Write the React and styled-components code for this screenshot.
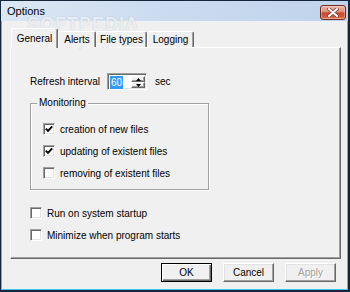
import React from "react";
import styled, { createGlobalStyle } from "styled-components";

const GlobalStyle = createGlobalStyle`
  html, body { margin: 0; padding: 0; background: #f0f0f0; }
  body { font-family: "Liberation Sans", Arial, sans-serif; font-size: 10px; color: #000; }
  * { box-sizing: border-box; }
`;

const Window = styled.div`
  position: relative;
  width: 350px;
  height: 292px;
  display: flex;
  flex-direction: column;
  border-style: solid;
  border-color: #16263a;
  border-width: 1px 2px 2px 1px;
  background: #f0f0f0;
  overflow: hidden;
`;

const TitleBar = styled.div`
  flex: none;
  height: 20px;
  display: flex;
  align-items: center;
  justify-content: space-between;
  padding: 0 2px 0 6px;
  background: linear-gradient(to right, #dce7f4 0%, #ccdcf0 45%, #bfd3ec 100%);
`;

const Title = styled.span`
  position: relative;
  z-index: 2;
  font-size: 11px;
  line-height: 1;
  color: #000;
`;

const CloseButton = styled.div`
  width: 26px;
  height: 15px;
  margin-top: 2px;
  border: 1px solid #6e2a1c;
  border-radius: 3px;
  display: flex;
  align-items: center;
  justify-content: center;
  background: linear-gradient(#ecb6a8 0%, #de8e79 45%, #c9482d 52%, #d35c40 85%, #e08a6e 100%);
  box-shadow: inset 0 0 0 1px rgba(255, 255, 255, 0.3);
`;

const Body = styled.div`
  flex: 1;
  display: flex;
  flex-direction: column;
  border: 1px solid #3ec4ee;
  border-top: none;
  padding: 7px 6px 7px 8px;
`;

const TabStrip = styled.div`
  flex: none;
  height: 19px;
  display: flex;
  align-items: flex-end;
  padding-left: 1px;
`;

const Tab = styled.div`
  position: relative;
  z-index: ${(p) => (p.$active ? 2 : 1)};
  width: ${(p) => p.$w}px;
  height: ${(p) => (p.$active ? 20 : 16)}px;
  margin-bottom: ${(p) => (p.$active ? -1 : 0)}px;
  display: flex;
  align-items: center;
  justify-content: center;
  background: #f0f0f0;
  border-top: 1px solid #fff;
  border-left: 1px solid #fff;
  border-right: 1px solid #696969;
  border-radius: 2px 2px 0 0;
  box-shadow: inset -1px 0 0 #a0a0a0;
  padding-bottom: ${(p) => (p.$active ? 1 : 0)}px;
`;

const Panel = styled.div`
  flex: none;
  height: 212px;
  display: flex;
  flex-direction: column;
  align-items: flex-start;
  border-style: solid;
  border-width: 1px;
  border-color: #fff #696969 #696969 #fff;
  box-shadow: inset -1px -1px 0 #a0a0a0;
  padding: 25px 0 0 19px;
`;

const Row = styled.div`
  display: flex;
  align-items: center;
  height: 17px;
`;

const FieldLabel = styled.span`
  width: 77px;
`;

const Spin = styled.div`
  width: 40px;
  height: 17px;
  display: flex;
  background: #fff;
  border-style: solid;
  border-width: 1px;
  border-color: #a0a0a0 #fff #fff #a0a0a0;
  box-shadow: inset 1px 1px 0 #696969, inset -1px -1px 0 #e3e3e3;
  padding: 2px 1px 1px 2px;
  margin-right: 8px;
`;

const SpinValue = styled.div`
  flex: 1;
  display: flex;
  align-items: center;
`;

const Selected = styled.span`
  background: #3399ff;
  color: #fff;
  padding: 1px 1px;
  line-height: 11px;
`;

const SpinButtons = styled.div`
  width: 14px;
  display: flex;
  flex-direction: column;
`;

const SpinButton = styled.div`
  flex: 1;
  display: flex;
  align-items: center;
  justify-content: center;
  background: #f0f0f0;
  border-style: solid;
  border-width: 1px;
  border-color: #fff #696969 #696969 #fff;
  box-shadow: inset -1px -1px 0 #a0a0a0;
`;

const Group = styled.div`
  position: relative;
  width: 179px;
  height: 87px;
  margin-top: 13px;
  border: 1px solid #a0a0a0;
  box-shadow: 1px 1px 0 #fff, inset 1px 1px 0 #fff;
  padding: 14px 0 5px 12px;
`;

const Legend = styled.span`
  position: absolute;
  top: -7px;
  left: 6px;
  padding: 0 2px;
  background: #f0f0f0;
  line-height: 12px;
`;

const CheckRow = styled.div`
  display: flex;
  align-items: center;
  gap: 5px;
  height: 22px;
  margin-top: ${(p) => p.$mt || 0}px;
`;

const Box = styled.div`
  width: 12px;
  height: 12px;
  display: flex;
  align-items: center;
  justify-content: center;
  background: #fff;
  border-style: solid;
  border-width: 1px;
  border-color: #a0a0a0 #fff #fff #a0a0a0;
  box-shadow: inset 1px 1px 0 #696969, inset -1px -1px 0 #e3e3e3;
`;

const ButtonRow = styled.div`
  flex: none;
  display: flex;
  justify-content: flex-end;
  gap: 11px;
  margin-top: 4px;
  padding-right: 5px;
`;

const Button = styled.div`
  width: 51px;
  height: 19px;
  display: flex;
  align-items: center;
  justify-content: center;
  background: #f0f0f0;
  color: ${(p) => (p.$disabled ? "#a0a0a0" : "#000")};
  text-shadow: ${(p) => (p.$disabled ? "1px 1px 0 #fff" : "none")};
  border: 1px solid ${(p) => (p.$default ? "#000" : "#fff")};
  border-right-color: ${(p) => (p.$default ? "#000" : "#696969")};
  border-bottom-color: ${(p) => (p.$default ? "#000" : "#696969")};
  box-shadow: ${(p) =>
    p.$default
      ? "inset 1px 1px 0 #fff, inset -1px -1px 0 #696969, inset -2px -2px 0 #a0a0a0"
      : "inset -1px -1px 0 #a0a0a0, inset 1px 1px 0 #e3e3e3"};
`;

const Watermark = styled.div`
  position: absolute;
  left: 26px;
  top: 13px;
  font-family: "Liberation Sans", Arial, sans-serif;
  font-weight: bold;
  font-size: 18px;
  letter-spacing: 1px;
  color: rgba(255, 255, 255, 0.75);
  text-shadow: 0 0 1px rgba(110, 130, 150, 0.5);
  pointer-events: none;
`;

const WatermarkUrl = styled.div`
  position: absolute;
  left: 46px;
  top: 40px;
  font-size: 8px;
  color: rgba(170, 170, 170, 0.35);
  pointer-events: none;
`;

const Check = () => (
  <svg width="8" height="8" viewBox="0 0 8 8">
    <polyline points="0.8,3.6 3,5.8 7.2,1.3" fill="none" stroke="#000" strokeWidth="1.9" />
  </svg>
);

const Arrow = ({ up }) => (
  <svg width="5" height="3" viewBox="0 0 5 3">
    <polygon points={up ? "2.5,0 5,3 0,3" : "0,0 5,0 2.5,3"} fill="#000" />
  </svg>
);

const CheckItem = ({ checked, children, mt }) => (
  <CheckRow $mt={mt}>
    <Box>{checked && <Check />}</Box>
    <span>{children}</span>
  </CheckRow>
);

export default function App() {
  return (
    <>
      <GlobalStyle />
      <Window>
        <TitleBar>
          <Title>Options</Title>
          <CloseButton>
            <svg width="12" height="9" viewBox="0 0 12 9">
              <path d="M2 1 L10 8 M10 1 L2 8" stroke="#7a3a2c" strokeWidth="3.4" strokeLinecap="round" />
              <path d="M2 1 L10 8 M10 1 L2 8" stroke="#fff" strokeWidth="2" strokeLinecap="round" />
            </svg>
          </CloseButton>
        </TitleBar>
        <Body>
          <TabStrip>
            <Tab $active $w={47}>General</Tab>
            <Tab $w={38}>Alerts</Tab>
            <Tab $w={51}>File types</Tab>
            <Tab $w={47}>Logging</Tab>
          </TabStrip>
          <Panel>
            <Row>
              <FieldLabel>Refresh interval</FieldLabel>
              <Spin>
                <SpinValue>
                  <Selected>60</Selected>
                </SpinValue>
                <SpinButtons>
                  <SpinButton><Arrow up /></SpinButton>
                  <SpinButton><Arrow /></SpinButton>
                </SpinButtons>
              </Spin>
              <span>sec</span>
            </Row>
            <Group>
              <Legend>Monitoring</Legend>
              <CheckItem checked>creation of new files</CheckItem>
              <CheckItem checked>updating of existent files</CheckItem>
              <CheckItem>removing of existent files</CheckItem>
            </Group>
            <CheckItem mt={12}>Run on system startup</CheckItem>
            <CheckItem>Minimize when program starts</CheckItem>
          </Panel>
          <ButtonRow>
            <Button $default>OK</Button>
            <Button>Cancel</Button>
            <Button $disabled>Apply</Button>
          </ButtonRow>
        </Body>
        <Watermark>SOFTPEDIA</Watermark>
        <WatermarkUrl>www.softpedia.com</WatermarkUrl>
      </Window>
    </>
  );
}
